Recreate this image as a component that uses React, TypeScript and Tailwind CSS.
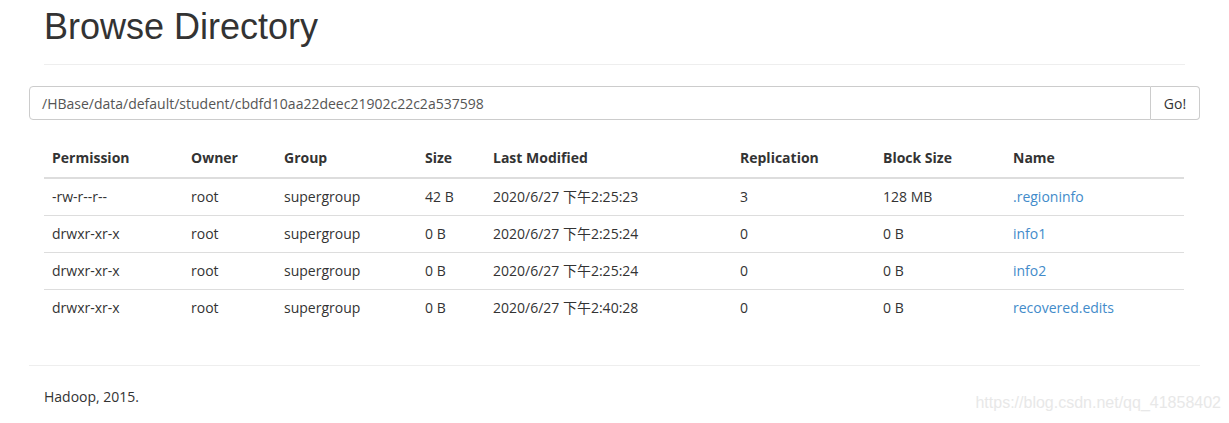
import React from "react";

const rows = [
  ["-rw-r--r--", "root", "supergroup", "42 B", "2020/6/27 下午2:25:23", "3", "128 MB", ".regioninfo"],
  ["drwxr-xr-x", "root", "supergroup", "0 B", "2020/6/27 下午2:25:24", "0", "0 B", "info1"],
  ["drwxr-xr-x", "root", "supergroup", "0 B", "2020/6/27 下午2:25:24", "0", "0 B", "info2"],
  ["drwxr-xr-x", "root", "supergroup", "0 B", "2020/6/27 下午2:40:28", "0", "0 B", "recovered.edits"],
];

const headers = ["Permission", "Owner", "Group", "Size", "Last Modified", "Replication", "Block Size", "Name"];
const widths = ["w-[139px]", "w-[93px]", "w-[141px]", "w-[68px]", "w-[247px]", "w-[143px]", "w-[130px]", "w-[179px]"];

export default function App() {
  return (
    <div className="w-[1229px] h-[423px] bg-white text-[#333] overflow-hidden">
      <div className="px-[29px]">
        <div className="px-[15px]">
          <h1 className="pt-[7px] h-[65px] border-b border-[#eee] text-[36px] leading-[40px] font-['Liberation_Sans',Arial,sans-serif] text-[#333]">
            Browse Directory
          </h1>
        </div>
        <div className="mt-[21px] flex h-[34px] font-['Open_Sans','Noto_Sans_CJK_SC',sans-serif] text-[14px]">
          <div className="flex-1 border border-[#ccc] rounded-l-[4px] px-[12px] flex items-center text-[#555]">
            /HBase/data/default/student/cbdfd10aa22deec21902c22c2a537598
          </div>
          <div className="w-[49px] border border-l-0 border-[#ccc] rounded-r-[4px] flex items-center justify-center text-[#333]">
            Go!
          </div>
        </div>
        <div className="px-[15px] mt-[20px]">
          <table className="w-[1140px] border-collapse font-['Open_Sans','Noto_Sans_CJK_SC',sans-serif] text-[14px] leading-[20px]">
            <thead>
              <tr className="border-b-2 border-[#ddd]">
                {headers.map((h, i) => (
                  <th key={h} className={`${widths[i]} text-left font-bold px-[8px] pt-[8px] pb-[9px] text-[#333]`}>
                    {h}
                  </th>
                ))}
              </tr>
            </thead>
            <tbody>
              {rows.map((r, ri) => (
                <tr key={ri} className={ri > 0 ? "border-t border-[#ddd]" : ""}>
                  {r.map((c, ci) => (
                    <td key={ci} className={`px-[8px] py-[8px] ${ci === 7 ? "text-[#428bca]" : "text-[#333]"}`}>
                      {c}
                    </td>
                  ))}
                </tr>
              ))}
            </tbody>
          </table>
        </div>
        <div className="mt-[39px] border-t border-[#eee] px-[15px] pt-[21px] flex justify-between items-start font-['Open_Sans',sans-serif] text-[14px] leading-[20px]">
          <span className="text-[#333]">Hadoop, 2015.</span>
          <span className="text-[16px] leading-[20px] text-[#e8e8e8] font-['Liberation_Sans',Arial,sans-serif] mr-[-36px] mt-[6px]">
            https://blog.csdn.net/qq_41858402
          </span>
        </div>
      </div>
    </div>
  );
}
